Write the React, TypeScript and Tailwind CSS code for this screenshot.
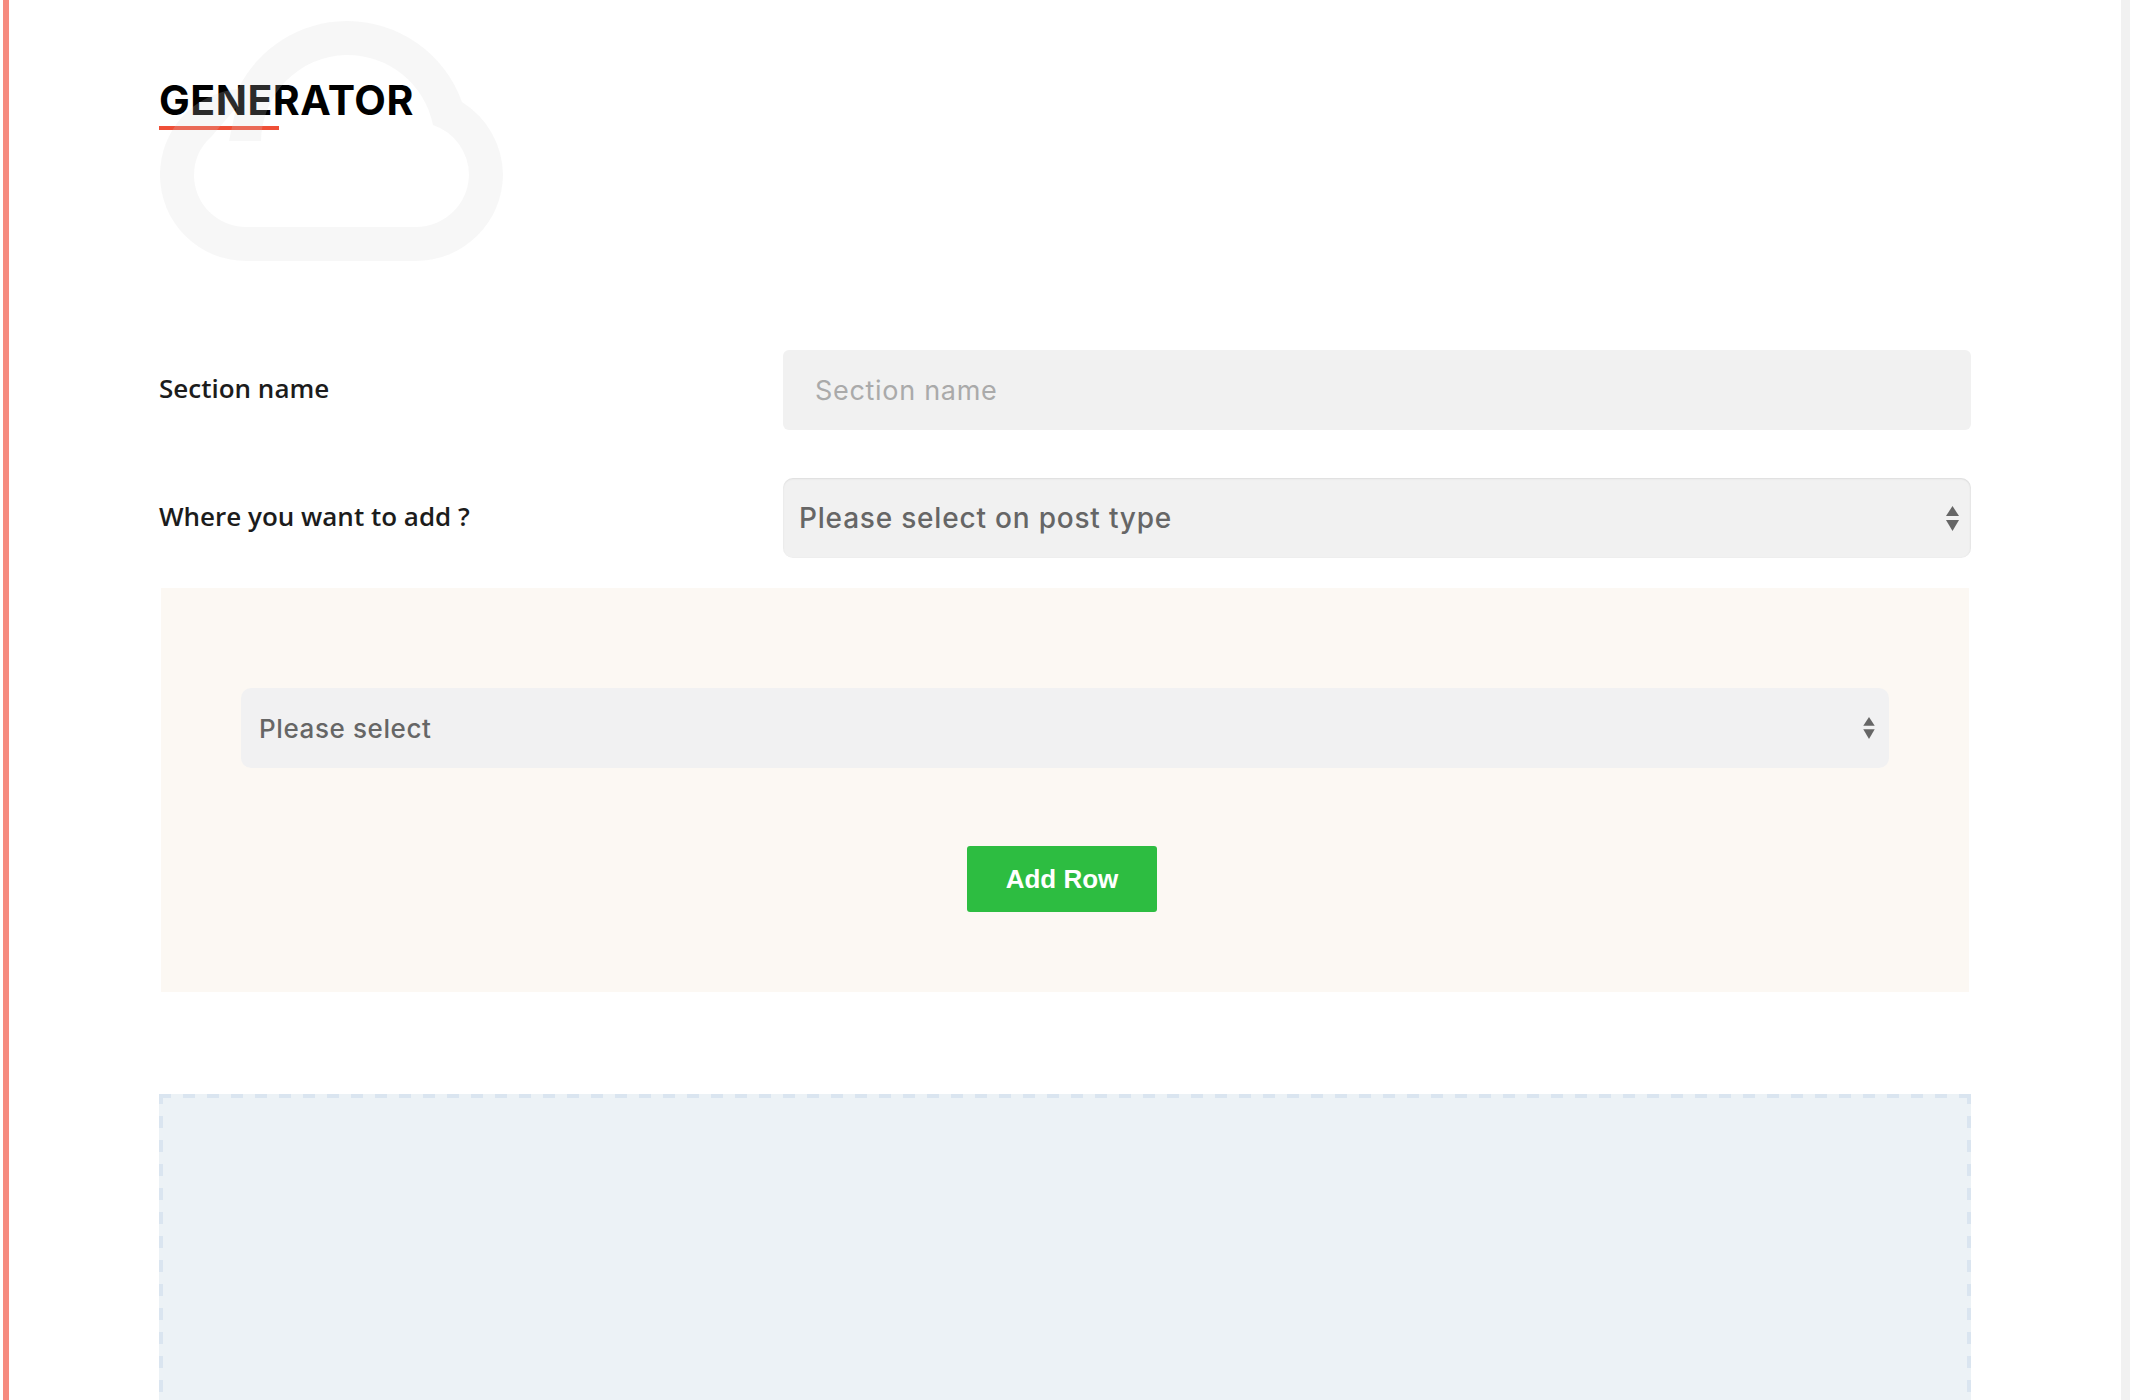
const labelCls = "w-[624px] shrink-0 font-['Open_Sans',sans-serif] text-[26px] font-semibold text-[#1c1c1c] leading-none -mt-1";

function SelectArrows({ className }: { className: string }) {
  return (
    <svg viewBox="0 0 13 25" className={className} fill="#666666">
      <path d="M6.5 0 L13 10 H0 Z" />
      <path d="M0 14 H13 L6.5 25 Z" />
    </svg>
  );
}

function Cloud() {
  // drawn in page pixels, left/top offset by the wrapper
  return (
    <svg viewBox="160 21 343 240" className="absolute left-[151px] top-[21px] w-[343px] h-[240px] pointer-events-none" fill="#d6d6d6" fillOpacity="0.2" fillRule="evenodd">
      <path d="M238 89 A122 122 0 0 1 346 21 A122 122 0 0 1 462 102 A87 87 0 0 1 503 175 A87 87 0 0 1 416 261 H246 A86 86 0 0 1 160 175 A86 86 0 0 1 238 89 Z M261 141 A87 87 0 0 1 346 55 A87 87 0 0 1 433 125 A53 53 0 0 1 469 175 A53 53 0 0 1 416 227 H246 A52 52 0 0 1 194 175 A52 52 0 0 1 211 137 L236 108 L229 141 Z" />
    </svg>
  );
}

export default function App() {
  return (
    <div className="flex h-[1400px] w-full overflow-hidden bg-white pl-[3px]">
      <div className="w-[6px] shrink-0 bg-[#f68b7f]" />

      <main className="relative flex-1 pl-[150px] pr-[150px] pt-[76px]">
        <h2 className="font-['Inter',sans-serif] text-[41px] font-bold leading-[48px] text-black tracking-[0.5px]">GENERATOR</h2>
        <div className="mt-[2px] h-1 w-[120px] bg-[#ef4f37]" />
        <Cloud />

        <div className="mt-[220px] flex items-center">
          <label className={labelCls}>Section name</label>
          <input
            placeholder="Section name"
            className="h-20 flex-1 rounded-md bg-[#f1f1f1] px-8 font-['Inter',sans-serif] text-[27px] tracking-[0.7px] text-[#555] outline-none placeholder:text-[#aaaaaa]"
          />
        </div>

        <div className="mt-12 flex items-center">
          <label className={labelCls}>Where you want to add ?</label>
          <div className="relative flex-1">
            <select className="h-20 w-full appearance-none rounded-[10px] bg-[#f1f1f1] pl-4 font-['Inter',sans-serif] text-[28px] font-medium tracking-[0.8px] text-[#666666] outline-none shadow-[inset_0_1px_2px_rgba(0,0,0,0.08),inset_-1px_0_2px_rgba(0,0,0,0.03)]">
              <option>Please select on post type</option>
            </select>
            <SelectArrows className="absolute right-3 top-7 h-[25px] w-[13px]" />
          </div>
        </div>

        <section className="mx-0.5 mt-[30px] bg-[#fcf8f3] px-20 pb-20 pt-[100px]">
          <div className="relative">
            <select className="h-20 w-full appearance-none rounded-[10px] bg-[#f1f1f2] pl-[18px] font-['Inter',sans-serif] text-[26px] font-medium tracking-[0.6px] text-[#666666] outline-none">
              <option>Please select</option>
            </select>
            <SelectArrows className="absolute right-[14px] top-[29px] h-[22px] w-3" />
          </div>
          <div className="mt-[78px] flex justify-center pr-[6px]">
            <button className="h-[66px] w-[190px] rounded-[3px] bg-[#2dbd41] font-['Liberation_Sans',sans-serif] text-[26px] font-bold text-white">Add Row</button>
          </div>
        </section>

        <div className="mt-[102px] h-[400px] bg-[#ecf2f6] [background-image:linear-gradient(to_right,#dae5f0_50%,transparent_50%),linear-gradient(to_bottom,#dae5f0_50%,transparent_50%),linear-gradient(to_bottom,#dae5f0_50%,transparent_50%)] [background-size:24px_4px,4px_24px,4px_24px] [background-position:0_0,0_-2px,100%_-2px] [background-repeat:repeat-x,repeat-y,repeat-y]" />
      </main>

      <div className="w-[9px] shrink-0 bg-[#f1f1f1]" />
    </div>
  );
}
